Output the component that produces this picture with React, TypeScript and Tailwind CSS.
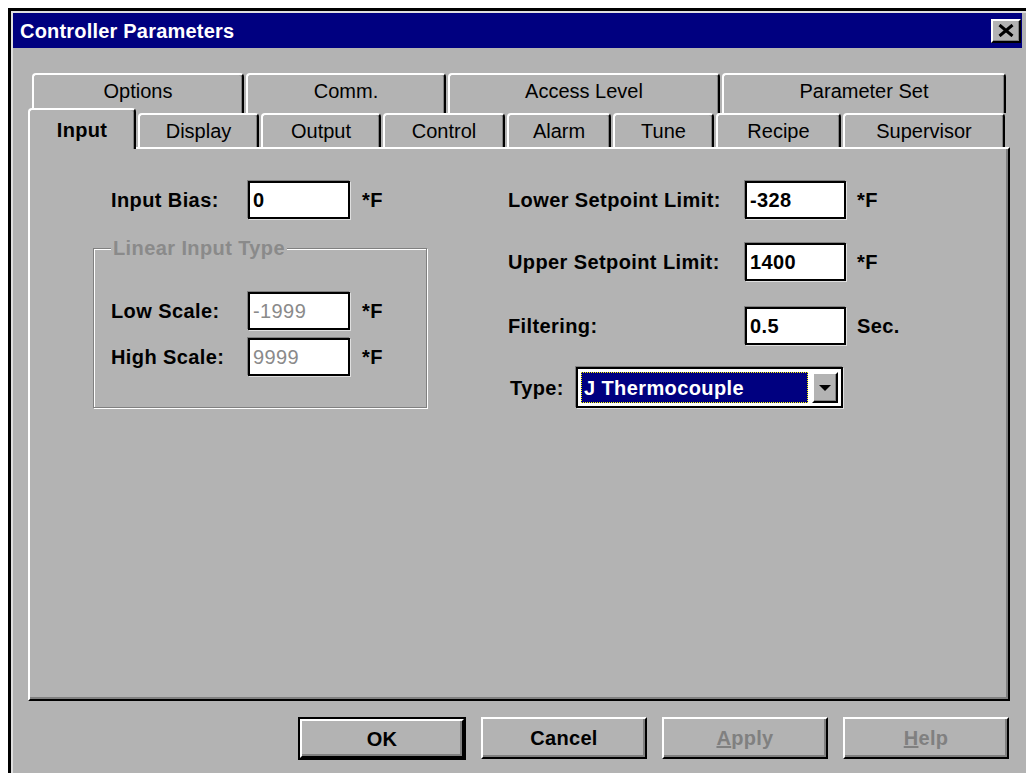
import React from "react";

const FONT = "font-['Liberation_Sans',Arial,sans-serif]";

type TabDef = { label: string; width: string; active?: boolean };

const backRow: TabDef[] = [
  { label: "Options", width: "w-[212px]" },
  { label: "Comm.", width: "w-[200px]" },
  { label: "Access Level", width: "w-[272px]" },
  { label: "Parameter Set", width: "w-[284px]" },
];

const frontRow: TabDef[] = [
  { label: "Input", width: "w-[108px]", active: true },
  { label: "Display", width: "w-[121px]" },
  { label: "Output", width: "w-[120px]" },
  { label: "Control", width: "w-[122px]" },
  { label: "Alarm", width: "w-[104px]" },
  { label: "Tune", width: "w-[101px]" },
  { label: "Recipe", width: "w-[125px]" },
  { label: "Supervisor", width: "w-[162px]" },
];

function Tab({ tab, tall }: { tab: TabDef; tall?: boolean }) {
  if (tab.active) {
    return (
      <div
        className={`relative z-10 -mb-[2px] flex h-[41px] shrink-0 justify-center rounded-t-[4px] border-t-2 border-l-2 border-r-2 border-t-white border-l-white border-r-black bg-[#b3b3b3] pt-[9px] text-[20px] leading-[22px] font-bold tracking-[0.3px] text-black shadow-[inset_-1px_0_0_#808080] ${tab.width}`}
      >
        {tab.label}
      </div>
    );
  }
  return (
    <div
      className={`flex shrink-0 justify-center rounded-t-[4px] border-t-2 border-l-2 border-r-2 border-t-white border-l-white border-r-black bg-[#b3b3b3] text-[20px] leading-[22px] text-black shadow-[inset_-1px_0_0_#808080] ${
        tall ? "h-[40px] pt-[5px]" : "h-[34px] pt-[5px]"
      } ${tab.width}`}
    >
      {tab.label}
    </div>
  );
}

function Field({
  value,
  width,
  disabled,
}: {
  value: string;
  width: string;
  disabled?: boolean;
}) {
  return (
    <div
      className={`flex h-[38px] items-center border-2 border-black bg-white pl-[3px] text-[20px] leading-[22px] shadow-[-1px_-1px_0_#808080,1px_1px_0_#dfdfdf] ${width} ${
        disabled ? "font-normal text-[#8a8a8a]" : "font-bold text-black"
      }`}
    >
      {value}
    </div>
  );
}

function Button({
  children,
  isDefault,
  disabled,
}: {
  children: React.ReactNode;
  isDefault?: boolean;
  disabled?: boolean;
}) {
  const face = (
    <div
      className={`flex h-full w-full items-center justify-center border-2 border-t-white border-l-white border-r-black border-b-black text-[20px] font-bold tracking-[0.3px] shadow-[inset_-2px_-2px_0_#808080] ${
        disabled ? "text-[#808080]" : "text-black"
      }`}
    >
      {children}
    </div>
  );
  if (isDefault) {
    return <div className="h-[43px] w-[168px] border-2 border-black">{face}</div>;
  }
  return <div className="h-[42px] w-[166px]">{face}</div>;
}

export default function App() {
  return (
    <div className={`h-[773px] w-[1026px] overflow-hidden bg-white pt-[8px] pl-[8px] ${FONT}`}>
      <div className="h-full border-t-[3px] border-l-[3px] border-black">
        <div className="h-full border-t-2 border-l-2 border-[#dfdfdf] bg-[#b3b3b3] pr-[4px]">
          {/* title bar */}
          <div className="flex h-[35px] items-center justify-between bg-[#000080] pr-[1px] pl-[7px]">
            <span className="text-[20px] font-bold tracking-[0.2px] text-white">
              Controller Parameters
            </span>
            <div className="flex h-[24px] w-[30px] items-center justify-center border-2 border-t-white border-l-white border-r-black border-b-black bg-[#b3b3b3] shadow-[inset_-1px_-1px_0_#808080]">
              <svg width="16" height="13" viewBox="0 0 16 13">
                <path d="M1.5 1 L14.5 12 M14.5 1 L1.5 12" stroke="#000" strokeWidth="3" />
              </svg>
            </div>
          </div>

          <div className="pt-[25px] pl-[15px]">
            {/* tab rows */}
            <div className="flex h-[40px] gap-[2px] pl-[4px]">
              {backRow.map((t) => (
                <Tab key={t.label} tab={t} tall />
              ))}
            </div>
            <div className="flex h-[34px] items-end gap-[2px]">
              {frontRow.map((t) => (
                <Tab key={t.label} tab={t} />
              ))}
            </div>

            {/* page */}
            <div className="h-[554px] w-[982px] border-2 border-t-white border-l-white border-r-black border-b-black shadow-[inset_-2px_-2px_0_#808080]">
              <div className="flex pt-[32px] pl-[63px] text-[20px] leading-[22px] font-bold tracking-[0.4px] text-black">
                {/* left column */}
                <div className="w-[334px]">
                  <div className="flex items-center pl-[18px]">
                    <span className="w-[137px]">Input Bias:</span>
                    <Field value="0" width="w-[102px]" />
                    <span className="ml-[12px]">*F</span>
                  </div>

                  <fieldset className="mt-[18px] border border-[#808080] pt-[33px] pb-[31px] pl-[17px] shadow-[inset_1px_1px_0_#fff,1px_1px_0_#fff]">
                    <legend className="bg-[#b3b3b3] px-[2px] text-[#8a8a8a]">
                      Linear Input Type
                    </legend>
                    <div className="flex items-center">
                      <span className="w-[137px]">Low Scale:</span>
                      <Field value="-1999" width="w-[102px]" disabled />
                      <span className="ml-[12px]">*F</span>
                    </div>
                    <div className="mt-[8px] flex items-center">
                      <span className="w-[137px]">High Scale:</span>
                      <Field value="9999" width="w-[102px]" disabled />
                      <span className="ml-[12px]">*F</span>
                    </div>
                  </fieldset>
                </div>

                {/* right column */}
                <div className="ml-[81px]">
                  <div className="flex items-center">
                    <span className="w-[237px]">Lower Setpoint Limit:</span>
                    <Field value="-328" width="w-[101px]" />
                    <span className="ml-[11px]">*F</span>
                  </div>
                  <div className="mt-[24px] flex items-center">
                    <span className="w-[237px]">Upper Setpoint Limit:</span>
                    <Field value="1400" width="w-[101px]" />
                    <span className="ml-[11px]">*F</span>
                  </div>
                  <div className="mt-[26px] flex items-center">
                    <span className="w-[237px]">Filtering:</span>
                    <Field value="0.5" width="w-[101px]" />
                    <span className="ml-[11px]">Sec.</span>
                  </div>
                  <div className="mt-[22px] flex items-center pl-[2px]">
                    <span className="w-[66px]">Type:</span>
                    <div className="flex h-[41px] w-[267px] items-center gap-[4px] border-2 border-black bg-white p-[3px] shadow-[-1px_-1px_0_#808080,1px_1px_0_#dfdfdf]">
                      <div className="flex h-full flex-1 items-center border border-dotted border-[#ffff00] bg-[#000080] pl-[2px] text-white">
                        J Thermocouple
                      </div>
                      <div className="flex h-full w-[26px] items-center justify-center border-2 border-t-white border-l-white border-r-black border-b-black bg-[#b3b3b3] shadow-[inset_-1px_-1px_0_#808080]">
                        <svg width="12" height="6" viewBox="0 0 12 6">
                          <path d="M0 0 H12 L6 6 Z" fill="#000" />
                        </svg>
                      </div>
                    </div>
                  </div>
                </div>
              </div>
            </div>

            {/* dialog buttons */}
            <div className="mt-[16px] flex w-[982px] justify-end gap-[15px] pr-[1px]">
              <Button isDefault>OK</Button>
              <Button>Cancel</Button>
              <Button disabled>
                <span>
                  <u>A</u>pply
                </span>
              </Button>
              <Button disabled>
                <span>
                  <u>H</u>elp
                </span>
              </Button>
            </div>
          </div>
        </div>
      </div>
    </div>
  );
}
